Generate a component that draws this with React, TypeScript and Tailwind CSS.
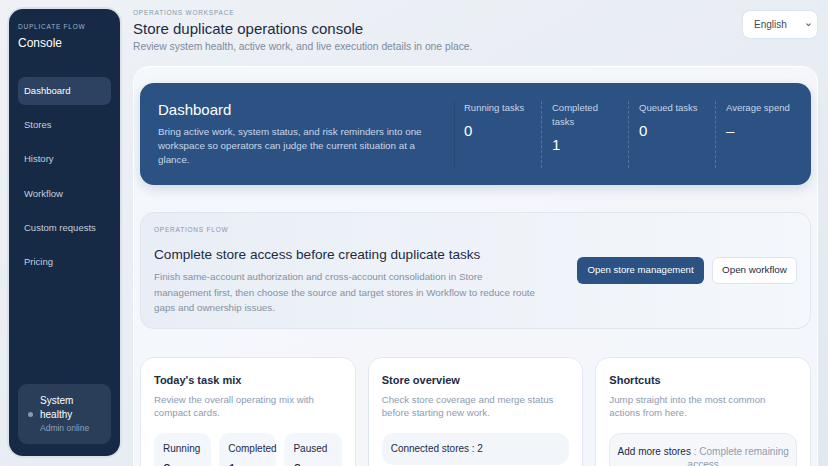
import React from 'react'

const navItems = ['Dashboard', 'Stores', 'History', 'Workflow', 'Custom requests', 'Pricing']

const stats = [
  { label: 'Running tasks', value: '0' },
  { label: 'Completed tasks', value: '1' },
  { label: 'Queued tasks', value: '0' },
  { label: 'Average spend', value: '–' },
]

const mix = [
  { label: 'Running', value: '0' },
  { label: 'Completed', value: '1' },
  { label: 'Paused', value: '0' },
]

const Sidebar: React.FC = () => (
  <aside className="mt-[9px] ml-[9px] flex h-[447px] w-[111px] shrink-0 flex-col rounded-[14px] bg-[#172a45] px-[9px] pt-[13px] pb-[12px] ring-2 ring-[#dbe2ec]">
    <p className="text-[6.5px] leading-[10px] tracking-[0.12em] text-[#9fb0c6] uppercase">Duplicate flow</p>
    <p className="mt-[3px] text-[12px] leading-[16px] text-white">Console</p>

    <nav className="mt-[26px] flex flex-col gap-[6.3px]">
      {navItems.map((item, i) => (
        <a
          key={item}
          href="#"
          className={
            i === 0
              ? 'flex h-[28px] items-center rounded-[7px] bg-[#2c4260] px-[6px] text-[9.5px] text-white'
              : 'flex h-[28px] items-center rounded-[7px] px-[6px] text-[9.5px] text-[#c3cedc]'
          }
        >
          {item}
        </a>
      ))}
    </nav>

    <div className="mt-auto flex h-[60px] items-center gap-[7px] rounded-[9px] bg-[#2a3e5a] px-[10px]">
      <span className="h-[5px] w-[5px] shrink-0 rounded-full bg-[#8b99ad]" />
      <div>
        <p className="text-[10px] leading-[14px] text-white">System healthy</p>
        <p className="text-[8.5px] leading-[13px] text-[#8ea2bb]">Admin online</p>
      </div>
    </div>
  </aside>
)

const Hero: React.FC = () => (
  <section className="flex h-[102px] items-center rounded-[14px] bg-[#2b5283] pr-[9px] pl-[18px] shadow-[0_4px_12px_rgba(30,60,100,0.15)]">
    <div className="flex-1 pr-[16px]">
      <h2 className="text-[15px] leading-[17px] text-white">Dashboard</h2>
      <p className="mt-[6.5px] text-[9.8px] leading-[14px] text-[#c9d6e8]">
        Bring active work, system status, and risk reminders into one workspace so operators can judge the current situation at a glance.
      </p>
    </div>
    <div className="grid h-[67px] w-[348px] grid-cols-4">
      {stats.map((s, i) => (
        <div
          key={s.label}
          className={
            i === 0
              ? 'border-l border-[#244a78] pr-[8px] pl-[9px]'
              : 'border-l border-dashed border-white/20 pr-[8px] pl-[10px]'
          }
        >
          <p className="max-w-[69px] text-[9.5px] leading-[14px] text-[#c7d5e8]">{s.label}</p>
          <p className="mt-[6px] text-[15px] leading-[20px] text-white">{s.value}</p>
        </div>
      ))}
    </div>
  </section>
)

const FlowCard: React.FC = () => (
  <section className="mt-[27px] flex items-center justify-between rounded-[14px] border border-[#dfe6ef] bg-gradient-to-r from-[#e9eef6] to-[#f4f7fb] px-[13px] py-[12px]">
    <div>
      <p className="text-[6.5px] leading-[10px] tracking-[0.12em] text-[#8a96a8] uppercase">Operations flow</p>
      <h3 className="mt-[11px] text-[13.6px] leading-[18px] text-[#1c2b44]">Complete store access before creating duplicate tasks</h3>
      <p className="mt-[5px] max-w-[387px] text-[9.8px] leading-[15.5px] text-[#8591a3]">
        Finish same-account authorization and cross-account consolidation in Store management first, then choose the source and target stores in Workflow to reduce route gaps and ownership issues.
      </p>
    </div>
    <div className="flex gap-[8px]">
      <button className="h-[27px] w-[127px] rounded-[6px] bg-[#2b5283] text-[9.6px] text-white">Open store management</button>
      <button className="h-[27px] w-[85px] rounded-[6px] border border-[#dde4ee] bg-white text-[9.8px] text-[#1c2b44]">Open workflow</button>
    </div>
  </section>
)

const Card: React.FC<{ title: string; desc: string; children: React.ReactNode }> = ({ title, desc, children }) => (
  <div className="rounded-[14px] border border-[#e2e8f1] bg-white px-[13px] pt-[15px] pb-[14px]">
    <h4 className="text-[11px] leading-[14px] font-semibold text-[#1c2b44]">{title}</h4>
    <p className="mt-[6px] text-[9.7px] leading-[13.5px] text-[#8d9bb0]">{desc}</p>
    <div className="mt-[13px]">{children}</div>
  </div>
)

export default function App() {
  return (
    <div className="flex h-[466px] w-full overflow-hidden bg-gradient-to-br from-[#eef2f7] to-[#e3e8f0] font-['Liberation_Sans',Arial,sans-serif]">
      <Sidebar />

      <main className="mr-[10px] ml-[13px] flex flex-1 flex-col">
        <header className="flex h-[66px] shrink-0 items-start justify-between">
          <div className="pt-[8px]">
            <p className="text-[6.5px] leading-[10px] tracking-[0.12em] text-[#8a96a8] uppercase">Operations workspace</p>
            <h1 className="mt-[1px] text-[15px] leading-[20px] text-[#1c2b44]">Store duplicate operations console</h1>
            <p className="mt-[0.5px] text-[10.3px] leading-[14px] text-[#7d8a9c]">
              Review system health, active work, and live execution details in one place.
            </p>
          </div>
          <button className="mt-[10px] flex h-[29px] w-[76px] items-center justify-between rounded-[8px] border border-[#dbe3ee] bg-white pr-[5px] pl-[11px] text-[10px] text-[#3b4a60]">
            English
            <svg width="7" height="7" viewBox="0 0 10 10" fill="none" stroke="#5b6678" strokeWidth="1.6" strokeLinecap="round" strokeLinejoin="round">
              <path d="M2.5 4l2.5 2.5L7.5 4" />
            </svg>
          </button>
        </header>

        <div className="flex-1 rounded-[16px] border border-white bg-[#f6f8fb]/85 px-[6px] pt-[16px]">
          <Hero />
          <FlowCard />

          <div className="mt-[28px] grid grid-cols-3 gap-[12px]">
            <Card title="Today's task mix" desc="Review the overall operating mix with compact cards.">
              <div className="grid grid-cols-3 gap-[8px]">
                {mix.map((m) => (
                  <div key={m.label} className="rounded-[10px] bg-[#f3f6fa] px-[9px] pt-[9px] pb-[8px]">
                    <p className="text-[10px] leading-[14px] text-[#1c2b44]">{m.label}</p>
                    <p className="mt-[4px] text-[14px] leading-[18px] text-[#1c2b44]">{m.value}</p>
                  </div>
                ))}
              </div>
            </Card>

            <Card title="Store overview" desc="Check store coverage and merge status before starting new work.">
              <div className="rounded-[12px] bg-[#f2f5fa] px-[9px] py-[9px]">
                <p className="text-[10px] leading-[14px] text-[#1c2b44]">Connected stores : 2</p>
              </div>
            </Card>

            <Card title="Shortcuts" desc="Jump straight into the most common actions from here.">
              <div className="rounded-[12px] border border-[#e3e9f1] bg-[#f5f7fb] px-[6px] pt-[11.5px] pb-[10px] text-center text-[10px] leading-[13px]">
                <span className="text-[#1c2b44]">Add more stores</span>
                <span className="text-[#8d9bb0]"> : Complete remaining access</span>
              </div>
            </Card>
          </div>
        </div>
      </main>
    </div>
  )
}
